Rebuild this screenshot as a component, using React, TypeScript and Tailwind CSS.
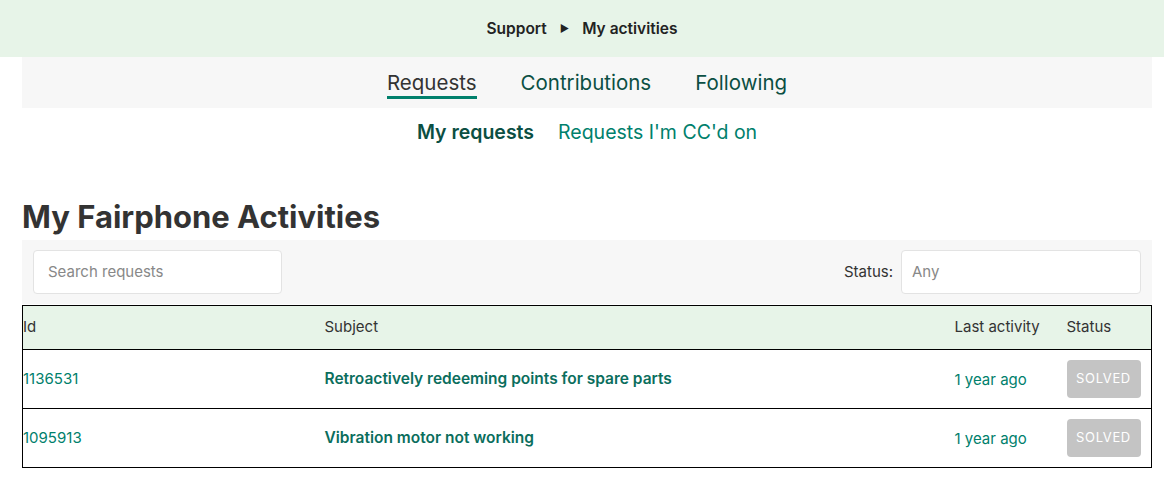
export default function App() {
  const rows = [
    { id: "1136531", subject: "Retroactively redeeming points for spare parts", last: "1 year ago" },
    { id: "1095913", subject: "Vibration motor not working", last: "1 year ago" },
  ]

  return (
    <div className="min-h-[479px] bg-white text-[#333] font-['Inter',sans-serif]">
      {/* Breadcrumb */}
      <header className="h-[57px] bg-[#e7f4e8] flex items-center justify-center gap-[13px] text-[15.5px] font-semibold text-[#222]">
        <span>Support</span>
        <span className="text-[10px]">▶</span>
        <span>My activities</span>
      </header>

      <div className="pl-[22px] w-[1152px]">
        {/* Tabs */}
        <nav className="h-[51px] bg-[#f7f7f7] flex justify-center gap-11 text-[20.5px] text-[#0b4f43]">
          <span className="pt-[11px] text-[#333] border-b-[3px] border-[#00806c] h-[42px]">Requests</span>
          <span className="pt-[11px]">Contributions</span>
          <span className="pt-[11px]">Following</span>
        </nav>

        {/* Sub tabs */}
        <div className="h-[50px] flex items-center justify-center gap-6 text-[19.5px]">
          <span className="font-semibold text-[#0b4f43]">My requests</span>
          <span className="text-[#00806c]">Requests I'm CC'd on</span>
        </div>

        <h1 className="mt-[41px] text-[31px] font-bold leading-[36px] text-[#333]">My Fairphone Activities</h1>

        {/* Filters */}
        <div className="mt-[5px] h-[64px] bg-[#f7f7f7] flex items-center justify-between px-[11px]">
          <div className="w-[249px] h-[44px] bg-white border border-[#e3e3e3] rounded flex items-center px-[14px] text-[15px] text-[#888]">
            Search requests
          </div>
          <div className="flex items-center gap-2">
            <span className="text-[15px] text-[#333]">Status:</span>
            <div className="w-[240px] h-[44px] bg-white border border-[#e3e3e3] rounded flex items-center px-[10px] text-[15px] text-[#888]">
              Any
            </div>
          </div>
        </div>

        {/* Table */}
        <table className="mt-[1px] w-full border border-black border-collapse text-[15px] table-fixed">
          <colgroup>
            <col className="w-[302px]" />
            <col className="w-[630px]" />
            <col className="w-[112px]" />
            <col />
          </colgroup>
          <thead>
            <tr className="h-[44px] bg-[#e7f4e8] text-left border-b border-black">
              <th className="font-normal">Id</th>
              <th className="font-normal">Subject</th>
              <th className="font-normal">Last activity</th>
              <th className="font-normal">Status</th>
            </tr>
          </thead>
          <tbody>
            {rows.map((r) => (
              <tr key={r.id} className="h-[59px] border-b border-black">
                <td className="text-[#00806c]">{r.id}</td>
                <td className="text-[#0b6e5d] font-semibold text-[15.5px]">{r.subject}</td>
                <td className="text-[#00806c] pt-[2px]">{r.last}</td>
                <td>
                  <span className="inline-flex items-center justify-center w-[74px] h-[38px] rounded bg-[#c4c4c4] text-white text-[13px] tracking-wider">
                    SOLVED
                  </span>
                </td>
              </tr>
            ))}
          </tbody>
        </table>
      </div>
    </div>
  )
}
